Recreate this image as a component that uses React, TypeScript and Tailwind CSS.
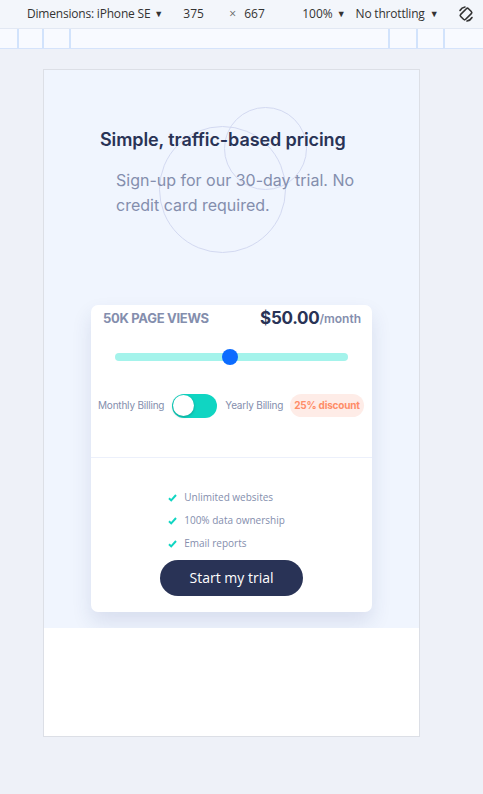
const features = ["Unlimited websites", "100% data ownership", "Email reports"];

const Check = () => (
  <svg width="9" height="8" viewBox="0 0 9 8" className="shrink-0">
    <path d="M1 4.3 3.2 6.4 8 1" fill="none" stroke="#10d5c2" strokeWidth="2" />
  </svg>
);

const Toolbar = () => (
  <div className="font-['Open_Sans',sans-serif] text-[12px] text-[#333] whitespace-nowrap">
    <div className="h-[29px] bg-[#f3f6fb] border-b border-[#e2e8f3] flex items-center">
      <span className="ml-[27px] tracking-[-0.2px]">Dimensions: iPhone SE</span>
      <span className="ml-[4px] text-[9px]">▼</span>
      <span className="ml-[20px] w-[40px]">375</span>
      <span className="ml-[6px] text-[#666]">×</span>
      <span className="ml-[8px] w-[40px]">667</span>
      <span className="ml-[18px]">100%</span>
      <span className="ml-[4px] text-[9px]">▼</span>
      <span className="ml-[10px] tracking-[-0.2px]">No throttling</span>
      <span className="ml-[5px] text-[9px]">▼</span>
      <svg width="18" height="18" viewBox="0 0 18 18" className="ml-[18px]">
        <g fill="none" stroke="#333" strokeWidth="1.6" strokeLinecap="round">
          <rect x="5.5" y="3.5" width="7" height="11" rx="1.5" transform="rotate(45 9 9)" />
          <path d="M3 5.5a7 7 0 0 1 5-3.5" />
          <path d="M15 12.5a7 7 0 0 1-5 3.5" />
        </g>
      </svg>
    </div>
    <div className="h-[20px] bg-[#f8faff] border-b border-[#d5e3fb] flex">
      <div className="w-[19px] border-r-2 border-[#d2e3fc]" />
      <div className="w-[25px] border-r-2 border-[#d2e3fc]" />
      <div className="w-[27px] border-r-2 border-[#d2e3fc]" />
      <div className="flex-1 border-r-2 border-[#d2e3fc]" />
      <div className="w-[28px] border-r-2 border-[#d2e3fc]" />
      <div className="w-[27px] border-r-2 border-[#d2e3fc]" />
      <div className="w-[38px]" />
    </div>
  </div>
);

export default function App() {
  return (
    <div className="w-[483px] h-[794px] overflow-hidden bg-[#eef1f8]">
      <Toolbar />
      <div className="ml-[43px] mt-[20px] w-[377px] h-[668px] border border-[#dcdfe6] bg-white">
        <div className="h-[558px] bg-[#f0f5fe] relative overflow-hidden font-['Inter',sans-serif]">
          <div className="absolute left-[180px] top-[37px] w-[83px] h-[83px] rounded-full border border-[#d3d9f1]" />
          <div className="absolute left-[115px] top-[56px] w-[127px] h-[127px] rounded-full border border-[#d3d9f1]" />

          <h1 className="relative pt-[58px] pl-[56px] text-[18px] leading-[24px] font-semibold text-[#293356] tracking-[-0.1px]">
            Simple, traffic-based pricing
          </h1>
          <p className="relative mt-[16px] ml-[72px] w-[240px] text-[16px] leading-[25px] text-[#848ead]">
            Sign-up for our 30-day trial. No credit card required.
          </p>

          <div className="relative mt-[87px] ml-[47px] w-[281px] bg-white rounded-[7px] shadow-[0_10px_20px_rgba(40,60,120,0.12)] whitespace-nowrap">
            <div className="flex items-center justify-between pl-[12px] pr-[11px] pt-[1px]">
              <span className="text-[13px] font-bold tracking-[-0.3px] text-[#848ead]">50K PAGE VIEWS</span>
              <span className="flex items-center">
                <span className="text-[17px] font-bold tracking-[-0.3px] text-[#293356]">$50.00</span>
                <span className="text-[12px] font-semibold text-[#848ead]">/month</span>
              </span>
            </div>

            <div className="mt-[21px] mx-[24px] h-[8px] rounded-full bg-[#a4f3eb] relative">
              <div className="absolute left-[107px] top-[-4px] w-[16px] h-[16px] rounded-full bg-[#0b6cff]" />
            </div>

            <div className="mt-[33px] flex items-center pl-[7px] text-[10px] tracking-[-0.2px] text-[#848ead]">
              <span>Monthly Billing</span>
              <div className="ml-[8px] w-[45px] h-[24px] rounded-full bg-[#10d5c2] flex items-center pl-[1px]">
                <div className="w-[21px] h-[21px] rounded-full bg-white shadow-[0_1px_3px_rgba(0,0,0,0.25)]" />
              </div>
              <span className="ml-[8px]">Yearly Billing</span>
              <span className="ml-[7px] h-[23px] px-[4px] rounded-full bg-[#feece7] text-[#ff8d68] font-bold flex items-center">
                25% discount
              </span>
            </div>

            <div className="mt-[39px] border-t border-[#ecf0fb]" />

            <ul className="mt-[32px] flex flex-col items-center font-['Open_Sans',sans-serif] text-[10px] text-[#848ead]">
              <div className="flex flex-col gap-[7px] ml-[-10px]">
                {features.map((f) => (
                  <li key={f} className="flex items-center gap-[7px] h-[16px]">
                    <Check />
                    <span>{f}</span>
                  </li>
                ))}
              </div>
            </ul>

            <div className="flex justify-center pt-[8px] pb-[16px]">
              <button className="w-[143px] h-[36px] rounded-full bg-[#293356] text-white text-[14px] font-['Open_Sans',sans-serif]">
                Start my trial
              </button>
            </div>
          </div>
        </div>
      </div>
    </div>
  );
}
